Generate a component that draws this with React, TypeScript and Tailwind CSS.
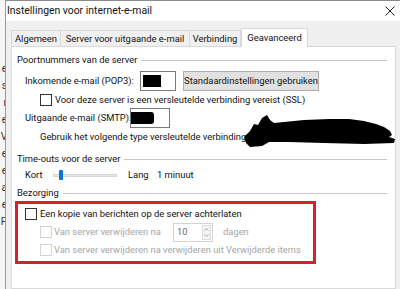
import { ChevronUp, ChevronDown } from 'lucide-react'

const font = { fontFamily: 'Roboto, "Noto Sans", sans-serif' }

const GroupHeader = ({ title }: { title: string }) => (
  <div className="flex items-center h-[14px] pl-[5px] pr-[8px]">
    <span className="pr-[4px]">{title}</span>
    <div className="flex-1 h-px bg-[#c8c8c8]" />
  </div>
)

const CheckBox = ({ disabled }: { disabled?: boolean }) => (
  <div
    className={
      disabled
        ? 'w-[12px] h-[12px] border border-[#d4d4d4] bg-white shrink-0'
        : 'w-[12px] h-[12px] border border-[#333] bg-white shrink-0'
    }
  />
)

export default function App() {
  return (
    <div className="w-[400px] h-[289px] overflow-hidden flex bg-[#f0f0f0] text-[#111] whitespace-nowrap text-[9.4px] leading-[14px]" style={font}>
      {/* venster erachter */}
      <div className="w-[6px] shrink-0 bg-[#f6f6f6] border-r border-[#9a9a9a] overflow-hidden flex flex-col items-end text-[10px] leading-[17px] pt-[60px]">
        {['e', 's', 'r', 'e', 'V', 'e', 'e', 'a', 'e', 'P'].map((c, i) => (
          <span key={i} className="block -mr-[2px] text-[#333]">{c}</span>
        ))}
      </div>

      {/* dialoog */}
      <div className="flex-1 flex flex-col border-t border-[#8c8c8c]">
        <div className="h-[20px] bg-white flex items-center justify-between pl-[1px] pr-[4px]">
          <span className="text-[10.4px]">Instellingen voor internet-e-mail</span>
          <svg width="10" height="10" viewBox="0 0 10 10" className="mr-[1px]">
            <path d="M0.5 0.5L9.5 9.5M9.5 0.5L0.5 9.5" stroke="#222" strokeWidth="1" />
          </svg>
        </div>

        {/* tabs */}
        <div className="h-[25px] flex items-end pl-[5px]">
          <div className="w-[50px] h-[16px] border border-b-0 border-[#d9d9d9] bg-[#f0f0f0] leading-[15px] text-center">Algemeen</div>
          <div className="w-[129px] h-[16px] border border-b-0 border-l-0 border-[#d9d9d9] bg-[#f0f0f0] leading-[15px] text-center">Server voor uitgaande e-mail</div>
          <div className="w-[51px] h-[16px] border border-b-0 border-l-0 border-[#d9d9d9] bg-[#f0f0f0] leading-[15px] text-center">Verbinding</div>
          <div className="w-[67px] h-[19px] -mb-px z-10 border border-b-0 border-[#d9d9d9] bg-white leading-[17px] text-center">Geavanceerd</div>
        </div>

        {/* tabpaneel */}
        <div className="flex-1 ml-[5px] mr-[4px] bg-white border border-[#d9d9d9] relative pt-[6px]">
          <GroupHeader title="Poortnummers van de server" />

          <div className="flex items-center h-[20px] mt-[4px] pl-[13px]">
            <span className="w-[115px] shrink-0">Inkomende e-mail (POP3):</span>
            <div className="w-[36px] h-[20px] shrink-0 border border-[#7a7a7a] bg-white flex items-center pl-[2px]">
              <div className="w-[18px] h-[12px] bg-black" />
            </div>
            <div className="ml-[7px] w-[136px] h-[20px] shrink-0 border border-[#adadad] bg-[#e1e1e1] flex items-center justify-center">
              Standaardinstellingen gebruiken
            </div>
          </div>

          <div className="flex items-center h-[14px] mt-[2px] pl-[28px] gap-[3px]">
            <CheckBox />
            <span>Voor deze server is een versleutelde verbinding vereist (SSL)</span>
          </div>

          <div className="flex items-center h-[20px] mt-[1px] pl-[13px]">
            <span className="w-[105px] shrink-0">Uitgaande e-mail (SMTP):</span>
            <div className="w-[40px] h-[20px] shrink-0 border border-[#7a7a7a] bg-white flex items-center">
              <div className="w-[23px] h-[12px] bg-black rounded-r-[3px]" />
            </div>
          </div>

          <div className="flex items-center h-[14px] mt-[2px] pl-[28px]">
            <span>Gebruik het volgende type versleutelde verbinding:</span>
          </div>

          {/* zwarte kras */}
          <svg className="absolute left-[232px] top-[68px]" width="152" height="32" viewBox="0 0 152 32">
            <path
              d="M0 22 L6 16 L10 9 L14 10 L18 3 L23 0 L26 5 L30 8 L40 7 L60 5 L85 4 L105 4 L120 6 L132 9 L140 12 L146 16 L148 20 L145 22 L151 24 L150 28 L120 29 L80 28 L45 27 L25 27 L18 31 L6 32 L2 28 Z"
              fill="#000"
            />
          </svg>

          <div className="mt-[8px]">
            <GroupHeader title="Time-outs voor de server" />
          </div>

          <div className="flex items-center h-[16px] mt-[1px] pl-[13px]">
            <span className="w-[28px] shrink-0">Kort</span>
            <div className="relative w-[64px] h-[10px] flex items-center">
              <div className="w-full h-[3px] bg-[#e7e7e7] border border-[#d6d6d6]" />
              <div className="absolute left-[6px] top-0 w-[4px] h-[10px] bg-[#0078d7] rounded-[1px]" />
            </div>
            <span className="ml-[11px] w-[29px] shrink-0">Lang</span>
            <span>1 minuut</span>
          </div>

          <div className="mt-[3px]">
            <GroupHeader title="Bezorging" />
          </div>

          {/* rood kader */}
          <div className="ml-[3px] mt-[1px] w-[301px] h-[63px] border-[3px] border-[#d9202a] pt-[3px]">
            <div className="flex items-center h-[14px] pl-[7px] gap-[3px]">
              <CheckBox />
              <span>Een kopie van berichten op de server achterlaten</span>
            </div>
            <div className="flex items-center h-[18px] mt-[2px] pl-[22px]">
              <CheckBox disabled />
              <span className="ml-[2px] w-[119px] shrink-0 text-[#a6a6a6]">Van server verwijderen na</span>
              <div className="w-[40px] h-[19px] shrink-0 border border-[#d4d4d4] flex items-center">
                <span className="flex-1 pl-[3px] text-[#6d6d6d]">10</span>
                <div className="w-[9px] h-[15px] mr-[1px] border border-[#dcdcdc] bg-[#f4f4f4] flex flex-col items-center justify-center">
                  <ChevronUp size={7} strokeWidth={2.5} className="text-[#8a8a8a] -mb-[1px]" />
                  <ChevronDown size={7} strokeWidth={2.5} className="text-[#8a8a8a]" />
                </div>
              </div>
              <span className="ml-[10px] text-[#a6a6a6]">dagen</span>
            </div>
            <div className="flex items-center h-[14px] mt-[2px] pl-[22px]">
              <CheckBox disabled />
              <span className="ml-[2px] text-[#a6a6a6]">Van server verwijderen na verwijderen uit Verwijderde items</span>
            </div>
          </div>
        </div>
      </div>
    </div>
  )
}
